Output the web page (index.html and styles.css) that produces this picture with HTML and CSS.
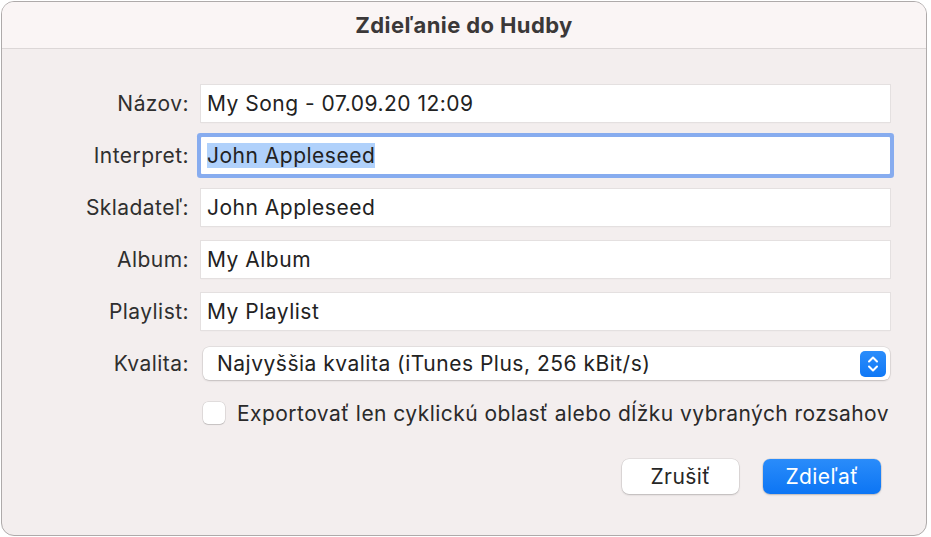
FILE: index.html
```html
<!DOCTYPE html>
<html lang="sk">
<head>
<meta charset="utf-8">
<title>Zdieľanie do Hudby</title>
<link rel="stylesheet" href="styles.css">
</head>
<body>
<div class="window">
  <div class="titlebar">Zdieľanie do Hudby</div>
  <div class="content">
    <div class="form">
      <label class="label">Názov:</label>
      <div class="field">My Song - 07.09.20 12:09</div>
      <label class="label">Interpret:</label>
      <div class="field focused"><span class="sel">John Appleseed</span></div>
      <label class="label">Skladateľ:</label>
      <div class="field">John Appleseed</div>
      <label class="label">Album:</label>
      <div class="field">My Album</div>
      <label class="label">Playlist:</label>
      <div class="field">My Playlist</div>
      <label class="label label-select">Kvalita:</label>
      <div class="select">
        <span class="select-text">Najvyššia kvalita (iTunes Plus, 256 kBit/s)</span>
        <span class="stepper">
          <svg width="26" height="26" viewBox="0 0 26 26">
            <path d="M9 10.5 L13 6.5 L17 10.5" fill="none" stroke="#fff" stroke-width="2" stroke-linecap="round" stroke-linejoin="round"/>
            <path d="M9 15.5 L13 19.5 L17 15.5" fill="none" stroke="#fff" stroke-width="2" stroke-linecap="round" stroke-linejoin="round"/>
          </svg>
        </span>
      </div>
      <div></div>
      <div class="check-row">
        <span class="checkbox"></span>
        <span class="check-text">Exportovať len cyklickú oblasť alebo dĺžku vybraných rozsahov</span>
      </div>
    </div>
    <div class="buttons">
      <button class="btn">Zrušiť</button>
      <button class="btn primary">Zdieľať</button>
    </div>
  </div>
</div>
</body>
</html>
```

FILE: styles.css
```css
html, body {
  margin: 0;
  padding: 0;
  background: #ffffff;
}
body {
  padding: 1px 0 0 1px;
  font-family: Inter, "Liberation Sans", sans-serif;
  color: #252525;
}
.window {
  width: 924px;
  height: 533px;
  border: 1px solid #aeaaaa;
  border-radius: 13px;
  background: #f3eeee;
  overflow: hidden;
  display: flex;
  flex-direction: column;
}
.titlebar {
  height: 47px;
  flex: none;
  background: #faf5f5;
  border-bottom: 1px solid #dcd7d7;
  display: flex;
  align-items: center;
  justify-content: center;
  font-size: 22px;
  letter-spacing: 0.4px;
  font-weight: 700;
  color: #3b3838;
  padding-bottom: 1px;
  box-sizing: border-box;
}
.content {
  padding: 36px 35px 0 0;
  display: flex;
  flex-direction: column;
}
.form {
  display: grid;
  grid-template-columns: 187px 689px;
  column-gap: 12px;
  grid-template-rows: 37px 37px 37px 37px 37px 35px 22px;
  row-gap: 15px;
}
.label {
  font-size: 21px;
  letter-spacing: 0.45px;
  text-align: right;
  align-self: center;
  color: #2f2f2f;
}
.field {
  background: #ffffff;
  box-shadow: 0 0 0 1px #e4e0e0, 0 1px 1px rgba(0,0,0,0.08);
  font-size: 21px;
  letter-spacing: 0.5px;
  padding: 0 6px;
  display: flex;
  align-items: center;
  color: #222;
}
.field.focused {
  box-shadow: 0 0 0 4px #87acef;
  border-radius: 1px;
}
.sel {
  background: #b0d1fb;
  line-height: 25px;
}
.label-select {
  margin-top: 2px;
}
.select {
  margin-top: 2px;
  margin-left: 2px;
  background: #ffffff;
  border-radius: 6px;
  box-shadow: 0 0 0 0.5px rgba(0,0,0,0.12), 0 1px 2px rgba(0,0,0,0.15);
  display: flex;
  align-items: center;
  justify-content: space-between;
  padding: 0 4px 0 14px;
  font-size: 21px;
  letter-spacing: 0.5px;
  color: #222;
}
.stepper {
  width: 26px;
  height: 26px;
  border-radius: 5px;
  background: linear-gradient(#2b8dfb, #0f78f6);
  display: flex;
}
.check-row {
  display: flex;
  align-items: center;
  gap: 12px;
  margin-top: 14px;
  margin-left: 2px;
}
.checkbox {
  width: 22px;
  height: 22px;
  border-radius: 5px;
  background: #fff;
  box-shadow: 0 0 0 0.5px rgba(0,0,0,0.15), 0 1px 1px rgba(0,0,0,0.12);
  flex: none;
}
.check-text {
  font-size: 21px;
  letter-spacing: 0.45px;
  white-space: nowrap;
  color: #2a2a2a;
}
.buttons {
  display: flex;
  justify-content: flex-end;
  gap: 24px;
  margin-top: 42px;
  padding-right: 10px;
}
.btn {
  width: 117px;
  height: 35px;
  border: none;
  border-radius: 7px;
  font-family: Inter, "Liberation Sans", sans-serif;
  font-size: 21px;
  letter-spacing: 0.4px;
  background: #ffffff;
  color: #262626;
  box-shadow: 0 0 0 0.5px rgba(0,0,0,0.12), 0 1px 2px rgba(0,0,0,0.18);
  padding: 0;
}
.btn.primary {
  width: 118px;
  background: linear-gradient(#2a8cfa, #0c75f4);
  color: #ffffff;
}
```
